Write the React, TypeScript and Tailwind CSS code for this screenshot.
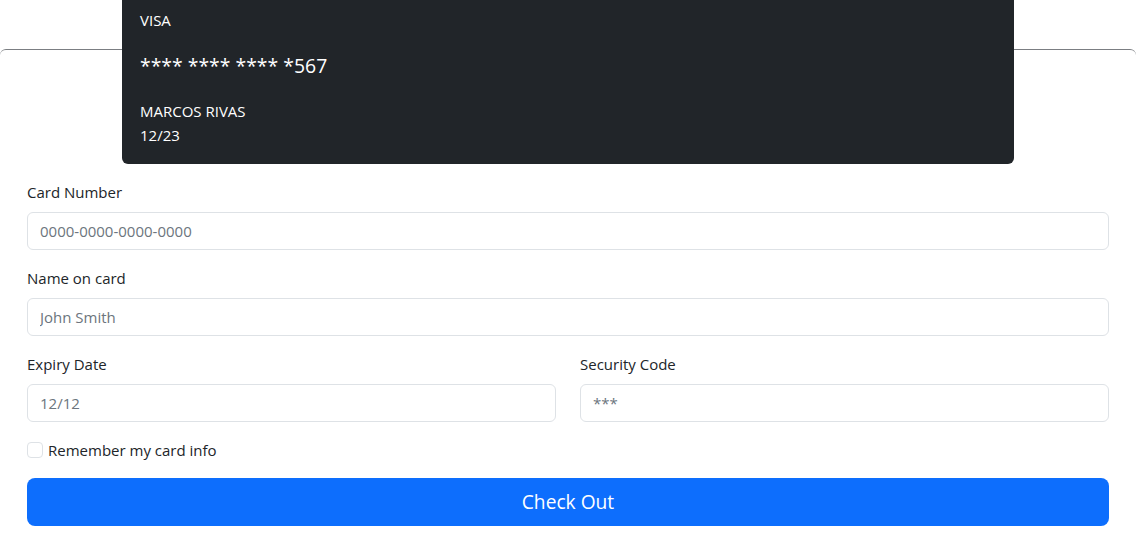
import React from "react";

export default function App() {
  const inputCls =
    "w-full h-[38px] border border-[#dee2e6] rounded-[6px] px-3 text-[15px] placeholder:text-[#6c757d] outline-none";
  return (
    <div
      className="w-[1136px] h-[537px] overflow-hidden bg-white text-[#212529]"
      style={{ fontFamily: '"Segoe UI", "Open Sans", "Noto Sans", sans-serif' }}
    >
      <div className="pt-[49px]">
        <div className="border-t border-[#7b7e82] rounded-t-[6px] px-[27px]">
          <div className="-mt-[50px] mx-[95px] bg-[#212529] rounded-b-[6px] text-white px-[18px] pt-2 pb-[17px] relative">
            <div className="text-[15px] leading-[24px]">VISA</div>
            <div className="text-[19.4px] leading-[30px] mt-[19px]">**** **** **** *567</div>
            <div className="text-[15px] leading-[24px] mt-[18px]">MARCOS RIVAS</div>
            <div className="text-[15px] leading-[24px]">12/23</div>
          </div>

          <form className="pt-4" onSubmit={(e) => e.preventDefault()}>
            <div className="mb-4">
              <label className="block text-[15px] leading-[24px] mb-2">Card Number</label>
              <input className={inputCls} placeholder="0000-0000-0000-0000" />
            </div>
            <div className="mb-4">
              <label className="block text-[15px] leading-[24px] mb-2">Name on card</label>
              <input className={inputCls} placeholder="John Smith" />
            </div>
            <div className="grid grid-cols-2 gap-6 mb-4">
              <div>
                <label className="block text-[15px] leading-[24px] mb-2">Expiry Date</label>
                <input className={inputCls} placeholder="12/12" />
              </div>
              <div>
                <label className="block text-[15px] leading-[24px] mb-2">Security Code</label>
                <input className={inputCls} placeholder="***" />
              </div>
            </div>
            <div className="flex items-center gap-[5px] mb-4 h-6">
              <span className="w-4 h-4 border border-[#dee2e6] rounded-[4px] bg-white"></span>
              <span className="text-[15px] leading-[24px]">Remember my card info</span>
            </div>
            <button
              type="submit"
              className="w-full h-12 bg-[#0d6efd] text-white text-[19.2px] leading-[30px] rounded-[8px]"
            >
              Check Out
            </button>
          </form>
        </div>
      </div>
    </div>
  );
}
